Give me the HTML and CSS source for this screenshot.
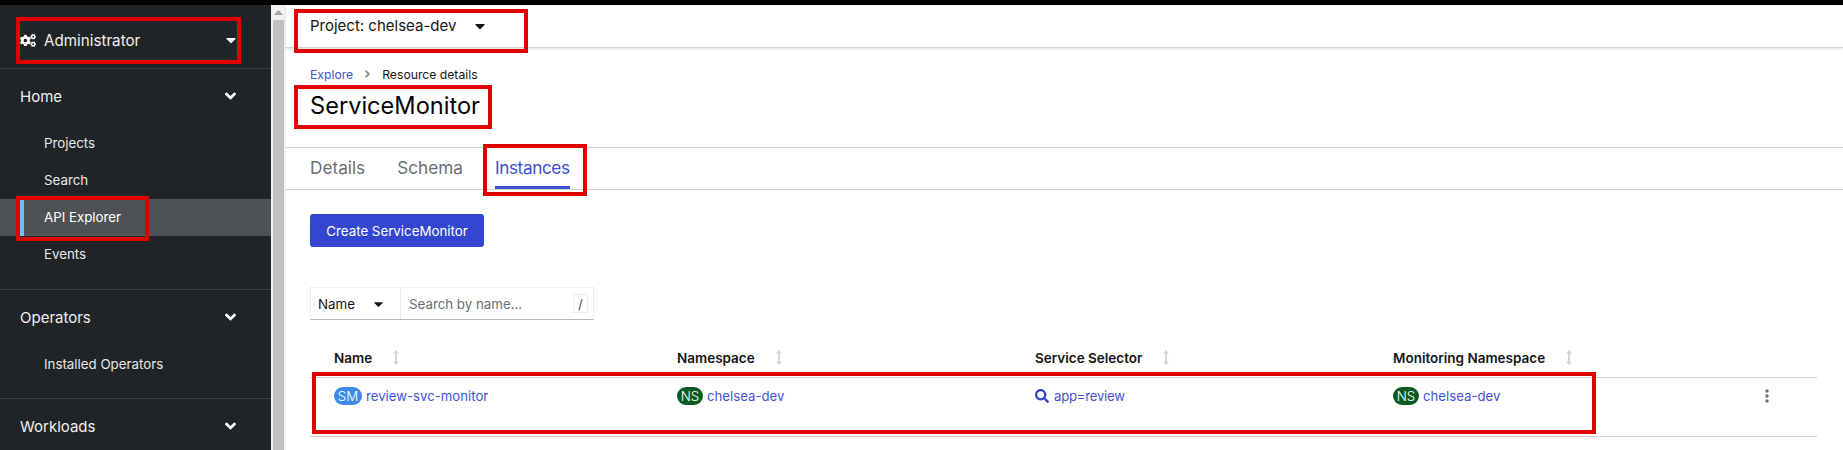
FILE: index.html
```html
<!DOCTYPE html>
<html lang="en">
<head>
<meta charset="utf-8">
<title>ServiceMonitor</title>
<link rel="stylesheet" href="styles.css">
</head>
<body>
<div class="blackbar"></div>
<div class="app">
  <nav class="sidebar">
    <div class="perspective">
      <svg class="cogs" viewBox="0 0 640 512" width="16" height="13"><path d="M512.1 191l-8.2 14.3c-3 5.3-9.4 7.5-15.1 5.4-11.8-4.4-22.6-10.7-32.1-18.6-4.6-3.8-5.8-10.5-2.8-15.7l8.2-14.3c-6.9-8-12.3-17.3-15.9-27.4h-16.5c-6 0-11.2-4.3-12.2-10.3-2-12-2.1-24.6 0-37.1 1-6 6.2-10.4 12.2-10.4h16.5c3.6-10.1 9-19.4 15.9-27.4l-8.2-14.3c-3-5.2-1.9-11.9 2.8-15.7 9.5-7.9 20.4-14.2 32.1-18.6 5.7-2.1 12.1.1 15.1 5.4l8.2 14.3c10.5-1.9 21.2-1.9 31.7 0L552 6.3c3-5.3 9.4-7.5 15.1-5.4 11.8 4.4 22.6 10.7 32.1 18.6 4.6 3.8 5.8 10.5 2.8 15.7l-8.2 14.3c6.9 8 12.3 17.3 15.9 27.4h16.5c6 0 11.2 4.3 12.2 10.3 2 12 2.1 24.6 0 37.1-1 6-6.2 10.4-12.2 10.4h-16.5c-3.6 10.1-9 19.4-15.9 27.4l8.2 14.3c3 5.2 1.9 11.9-2.8 15.7-9.5 7.9-20.4 14.2-32.1 18.6-5.7 2.1-12.1-.1-15.1-5.4l-8.2-14.3c-10.4 1.9-21.2 1.9-31.7 0zm-10.5-58.8c38.5 29.6 82.4-14.3 52.8-52.8-38.5-29.7-82.4 14.3-52.8 52.8zM386.3 286.1l33.7 16.8c10.1 5.8 14.5 18.1 10.5 29.1-8.9 24.2-26.4 46.4-42.6 65.8-7.4 8.9-20.2 11.1-30.3 5.3l-29.1-16.8c-16 13.7-34.6 24.6-54.9 31.7v33.6c0 11.6-8.3 21.6-19.7 23.6-24.6 4.2-50.4 4.4-75.9 0-11.5-2-20-11.9-20-23.6V418c-20.3-7.2-38.9-18-54.9-31.7L74 403c-10 5.8-22.9 3.6-30.3-5.3-16.2-19.4-33.3-41.6-42.2-65.7-4-10.9.4-23.2 10.5-29.1l33.3-16.8c-3.9-20.9-3.9-42.4 0-63.4L12 205.8c-10.1-5.8-14.6-18.1-10.5-29 8.9-24.2 26-46.4 42.2-65.8 7.4-8.9 20.2-11.1 30.3-5.3l29.1 16.8c16-13.7 34.6-24.6 54.9-31.7V57.1c0-11.5 8.2-21.5 19.6-23.5 24.6-4.2 50.5-4.4 76-.1 11.5 2 20 11.9 20 23.6v33.6c20.3 7.2 38.9 18 54.9 31.7l29.1-16.8c10-5.8 22.9-3.6 30.3 5.3 16.2 19.4 33.2 41.6 42.1 65.8 4 10.9.1 23.2-10 29.1l-33.7 16.8c3.9 21 3.9 42.5 0 63.5zm-117.6 21.1c59.2-77-28.7-164.9-105.7-105.7-59.2 77 28.7 164.9 105.7 105.7zm243.4 182.7l-8.2 14.3c-3 5.3-9.4 7.5-15.1 5.4-11.8-4.4-22.6-10.7-32.1-18.6-4.6-3.8-5.8-10.5-2.8-15.7l8.2-14.3c-6.9-8-12.3-17.3-15.9-27.4h-16.5c-6 0-11.2-4.3-12.2-10.3-2-12-2.1-24.6 0-37.1 1-6 6.2-10.4 12.2-10.4h16.5c3.6-10.1 9-19.4 15.9-27.4l-8.2-14.3c-3-5.2-1.9-11.9 2.8-15.7 9.5-7.9 20.4-14.2 32.1-18.6 5.7-2.1 12.1.1 15.1 5.4l8.2 14.3c10.5-1.9 21.2-1.9 31.7 0l8.2-14.3c3-5.3 9.4-7.5 15.1-5.4 11.8 4.4 22.6 10.7 32.1 18.6 4.6 3.8 5.8 10.5 2.8 15.7l-8.2 14.3c6.9 8 12.3 17.3 15.9 27.4h16.5c6 0 11.2 4.3 12.2 10.3 2 12 2.1 24.6 0 37.1-1 6-6.2 10.4-12.2 10.4h-16.5c-3.6 10.1-9 19.4-15.9 27.4l8.2 14.3c3 5.2 1.9 11.9-2.8 15.7-9.5 7.9-20.4 14.2-32.1 18.6-5.7 2.1-12.1-.1-15.1-5.4l-8.2-14.3c-10.4 1.9-21.2 1.9-31.7 0zM501.6 431c38.5 29.6 82.4-14.3 52.8-52.8-38.5-29.6-82.4 14.3-52.8 52.8z"/></svg>
      <span class="perspective-label">Administrator</span>
      <svg class="caret" viewBox="0 0 320 512" width="10" height="16"><path d="M31.3 192h257.3c17.8 0 26.7 21.5 14.1 34.1L174.1 354.8c-7.8 7.8-20.5 7.8-28.3 0L17.2 226.1C4.6 213.5 13.5 192 31.3 192z"/></svg>
    </div>
    <section class="nav-section nav-home">
      <div class="nav-head"><span>Home</span><svg class="chev" viewBox="0 0 320 512" width="11" height="18"><path d="M143 352.3L7 216.3c-9.4-9.4-9.4-24.6 0-33.9l22.6-22.6c9.4-9.4 24.6-9.4 33.9 0l96.4 96.4 96.4-96.4c9.4-9.4 24.6-9.4 33.9 0l22.6 22.6c9.4 9.4 9.4 24.6 0 33.9l-136 136c-9.2 9.4-24.4 9.4-33.8 0z"/></svg></div>
      <a class="nav-item">Projects</a>
      <a class="nav-item">Search</a>
      <a class="nav-item active">API Explorer</a>
      <a class="nav-item">Events</a>
    </section>
    <section class="nav-section nav-ops">
      <div class="nav-head"><span>Operators</span><svg class="chev" viewBox="0 0 320 512" width="11" height="18"><path d="M143 352.3L7 216.3c-9.4-9.4-9.4-24.6 0-33.9l22.6-22.6c9.4-9.4 24.6-9.4 33.9 0l96.4 96.4 96.4-96.4c9.4-9.4 24.6-9.4 33.9 0l22.6 22.6c9.4 9.4 9.4 24.6 0 33.9l-136 136c-9.2 9.4-24.4 9.4-33.8 0z"/></svg></div>
      <a class="nav-item">Installed Operators</a>
    </section>
    <section class="nav-section nav-work">
      <div class="nav-head"><span>Workloads</span><svg class="chev" viewBox="0 0 320 512" width="11" height="18"><path d="M143 352.3L7 216.3c-9.4-9.4-9.4-24.6 0-33.9l22.6-22.6c9.4-9.4 24.6-9.4 33.9 0l96.4 96.4 96.4-96.4c9.4-9.4 24.6-9.4 33.9 0l22.6 22.6c9.4 9.4 9.4 24.6 0 33.9l-136 136c-9.2 9.4-24.4 9.4-33.8 0z"/></svg></div>
    </section>
  </nav>
  <div class="scrollbar">
    <div class="scroll-btn"><svg viewBox="0 0 9 5" width="9" height="5"><path d="M4.5 0L9 5H0z"/></svg></div>
    <div class="scroll-thumb"></div>
  </div>
  <main class="main">
    <div class="projectbar">
      <span>Project: chelsea-dev</span>
      <svg class="caret dark" viewBox="0 0 320 512" width="10" height="16"><path d="M31.3 192h257.3c17.8 0 26.7 21.5 14.1 34.1L174.1 354.8c-7.8 7.8-20.5 7.8-28.3 0L17.2 226.1C4.6 213.5 13.5 192 31.3 192z"/></svg>
    </div>
    <header class="pagehead">
      <div class="crumbs"><a class="link">Explore</a><svg class="crumb-sep" viewBox="0 0 256 512" width="7" height="12"><path d="M224.3 273l-136 136c-9.4 9.4-24.6 9.4-33.9 0l-22.6-22.6c-9.4-9.4-9.4-24.6 0-33.9l96.4-96.4-96.4-96.4c-9.4-9.4-9.4-24.6 0-33.9L54.3 103c9.4-9.4 24.6-9.4 33.9 0l136 136c9.5 9.4 9.5 24.6.1 34z"/></svg><span>Resource details</span></div>
      <h1 class="title">ServiceMonitor</h1>
    </header>
    <div class="tabs">
      <a class="tab">Details</a>
      <a class="tab">Schema</a>
      <a class="tab current">Instances</a>
    </div>
    <div class="content">
      <button class="btn">Create ServiceMonitor</button>
      <div class="filter">
        <div class="filter-select"><span>Name</span><svg class="caret dark small" viewBox="0 0 320 512" width="9" height="14"><path d="M31.3 192h257.3c17.8 0 26.7 21.5 14.1 34.1L174.1 354.8c-7.8 7.8-20.5 7.8-28.3 0L17.2 226.1C4.6 213.5 13.5 192 31.3 192z"/></svg></div>
        <div class="filter-input"><span>Search by name...</span><kbd class="slash">/</kbd></div>
      </div>
      <div class="table">
        <div class="row thead">
          <div class="cell"><span>Name</span><svg class="sort" viewBox="0 0 8 16" width="8" height="15"><path d="M4 0l3.2 3.6H5v8.8h2.2L4 16 .8 12.4H3V3.6H.8z"/></svg></div>
          <div class="cell"><span>Namespace</span><svg class="sort" viewBox="0 0 8 16" width="8" height="15"><path d="M4 0l3.2 3.6H5v8.8h2.2L4 16 .8 12.4H3V3.6H.8z"/></svg></div>
          <div class="cell"><span>Service Selector</span><svg class="sort" viewBox="0 0 8 16" width="8" height="15"><path d="M4 0l3.2 3.6H5v8.8h2.2L4 16 .8 12.4H3V3.6H.8z"/></svg></div>
          <div class="cell"><span>Monitoring Namespace</span><svg class="sort" viewBox="0 0 8 16" width="8" height="15"><path d="M4 0l3.2 3.6H5v8.8h2.2L4 16 .8 12.4H3V3.6H.8z"/></svg></div>
          <div class="cell"></div>
        </div>
        <div class="row tbody">
          <div class="cell"><span class="badge sm">SM</span><a class="link">review-svc-monitor</a></div>
          <div class="cell"><span class="badge ns">NS</span><a class="link">chelsea-dev</a></div>
          <div class="cell"><svg class="search" viewBox="0 0 512 512" width="14" height="14"><path d="M505 442.7L405.3 343c-4.5-4.5-10.6-7-17-7H372c27.6-35.3 44-79.7 44-128C416 93.1 322.9 0 208 0S0 93.1 0 208s93.1 208 208 208c48.3 0 92.7-16.4 128-44v16.3c0 6.4 2.5 12.5 7 17l99.7 99.7c9.4 9.4 24.6 9.4 33.9 0l28.3-28.3c9.4-9.4 9.4-24.6.1-34zM208 336c-70.7 0-128-57.2-128-128 0-70.7 57.2-128 128-128 70.7 0 128 57.2 128 128 0 70.7-57.2 128-128 128z"/></svg><a class="link narrow">app=review</a></div>
          <div class="cell"><span class="badge ns">NS</span><a class="link">chelsea-dev</a></div>
          <div class="cell"><svg class="kebab" viewBox="0 0 4 14" width="4" height="14"><circle cx="2" cy="2" r="1.7"/><circle cx="2" cy="7" r="1.7"/><circle cx="2" cy="12" r="1.7"/></svg></div>
        </div>
      </div>
    </div>
  </main>
</div>
<div class="mark mark-admin"></div>
<div class="mark mark-api"></div>
<div class="mark mark-project"></div>
<div class="mark mark-title"></div>
<div class="mark mark-tab"></div>
<div class="mark mark-row"></div>
</body>
</html>
```
FILE: styles.css
```css
* { box-sizing: border-box; }
html, body { margin: 0; padding: 0; height: 100%; overflow: hidden; }
body {
  position: relative;
  width: 1843px;
  height: 450px;
  background: #fff;
  color: #151515;
  font-family: Inter, "Liberation Sans", sans-serif;
  display: flex;
  flex-direction: column;
}
.blackbar { height: 5px; background: #000; flex: none; }
.app { flex: 1; display: flex; min-height: 0; }

/* Sidebar */
.sidebar { width: 271px; flex: none; background: #212427; color: #f0f0f0; overflow: hidden; }
.perspective { height: 64px; display: flex; align-items: center; padding: 7px 35px 0 20px; border-bottom: 1px solid #3c3f42; font-size: 15.2px; }
.cogs { flex: none; margin-right: 8px; fill: #fff; }
.perspective-label { flex: 1; }
.caret { fill: #fff; flex: none; }
.caret.dark { fill: #151515; }
.nav-section { border-bottom: 1px solid #3c3f42; }
.nav-home { height: 221px; }
.nav-ops { height: 109px; }
.nav-head { height: 56px; display: flex; align-items: center; justify-content: space-between; padding: 0 35px 2px 20px; font-size: 15px; }
.chev { fill: #fff; flex: none; }
.nav-item { display: flex; align-items: center; height: 37px; padding: 0 0 1px 44px; font-size: 13.3px; color: #e8e8e8; }
.nav-item.active { background: #4f5255; color: #fff; position: relative; }
.nav-item.active::before { content: ""; position: absolute; left: 20px; top: 0; bottom: 0; width: 4px; background: #73bcf7; }

/* Scrollbar */
.scrollbar { width: 15px; flex: none; background: #f1f1f1; display: flex; flex-direction: column; }
.scroll-btn { height: 15px; display: flex; align-items: center; justify-content: center; }
.scroll-btn svg { fill: #a3a3a3; }
.scroll-thumb { flex: 1; margin: 0 2px; background: #c1c1c1; }

/* Main */
.main { flex: 1; min-width: 0; }
.projectbar { height: 43px; display: flex; align-items: center; padding: 0 0 1px 24px; gap: 19px; font-size: 15px; border-bottom: 1px solid #d2d2d2; box-shadow: 0 1px 2px rgba(3,3,3,.12); }
.pagehead { height: 100px; padding: 16px 0 0 24px; border-bottom: 1px solid #d2d2d2; }
.crumbs { display: flex; align-items: center; height: 20px; font-size: 12.2px; }
.crumb-sep { fill: #8a8d90; margin: 0 11px; }
.title { margin: 6px 0 0; font-size: 23.6px; line-height: 32px; font-weight: 400; color: #030303; }
.link { color: #4353d6; }
.link.narrow { letter-spacing: -.25px; }
.tabs { height: 42px; display: flex; padding-left: 24px; gap: 32px; border-bottom: 1px solid #d2d2d2; }
.tab { display: flex; align-items: center; height: 41px; padding-bottom: 2px; font-size: 17.2px; color: #6a6e73; }
.tab.current { color: #3e4fd0; letter-spacing: -.4px; box-shadow: inset 0 -3px 0 #3e4fd0; }
.content { padding: 24px 0 0 24px; }
.btn { display: block; width: 174px; height: 33px; border: 0; border-radius: 3px; background: #3446d0; color: #fff; font: inherit; font-size: 13.3px; padding: 0; }
.filter { display: flex; width: 284px; height: 33px; margin-top: 40px; border: 1px solid #ededed; border-bottom: 1px solid #b8bbbe; font-size: 13.3px; }
.filter-select { width: 90px; flex: none; display: flex; align-items: center; justify-content: space-between; padding: 0 17px 0 7px; border-right: 1px solid #ededed; }
.filter-input { flex: 1; display: flex; align-items: center; justify-content: space-between; padding: 0 5px 0 8px; color: #6a6e73; }
.slash { font: inherit; width: 15px; height: 19px; border: 1px solid #ededed; border-radius: 2px; display: flex; align-items: center; justify-content: center; color: #555; }

.table { width: 1507px; margin-top: 19px; font-size: 13.5px; }
.row { display: grid; grid-template-columns: 367px 358px 358px 372px 52px; }
.cell { display: flex; align-items: center; }
.thead { height: 39px; border-bottom: 1px solid #d2d2d2; padding-bottom: 1px; font-weight: 600; }
.thead .cell:first-child { padding-left: 24px; }
.thead .cell .sort { margin-left: 20px; fill: #d2d2d2; }
.tbody { height: 59px; border-bottom: 1px solid #d2d2d2; align-items: start; padding-top: 8px; font-size: 13.2px; }
.tbody .cell { height: 19px; }
.tbody .cell:first-child { padding-left: 24px; }
.badge { display: inline-flex; align-items: center; justify-content: center; flex: none; width: 28px; height: 18px; border-radius: 9px; margin-right: 4px; color: #fff; font-size: 13.3px; font-weight: 300; }
.badge.sm { background: #3e8ae8; }
.badge.ns { background: #0b5a1f; width: 26px; }
.search { fill: #3446d0; margin-right: 5px; flex: none; }
.kebab { fill: #6a6e73; }

/* Red annotation boxes laid over the screenshot */
.mark { position: absolute; border: 4px solid #e10000; pointer-events: none; }
.mark-admin { left: 16px; top: 17px; width: 225px; height: 47px; }
.mark-api { left: 16px; top: 196px; width: 133px; height: 45px; }
.mark-project { left: 294px; top: 9px; width: 234px; height: 44px; }
.mark-title { left: 294px; top: 85px; width: 198px; height: 44px; }
.mark-tab { left: 483px; top: 144px; width: 104px; height: 52px; }
.mark-row { left: 312px; top: 372px; width: 1284px; height: 62px; }
```
